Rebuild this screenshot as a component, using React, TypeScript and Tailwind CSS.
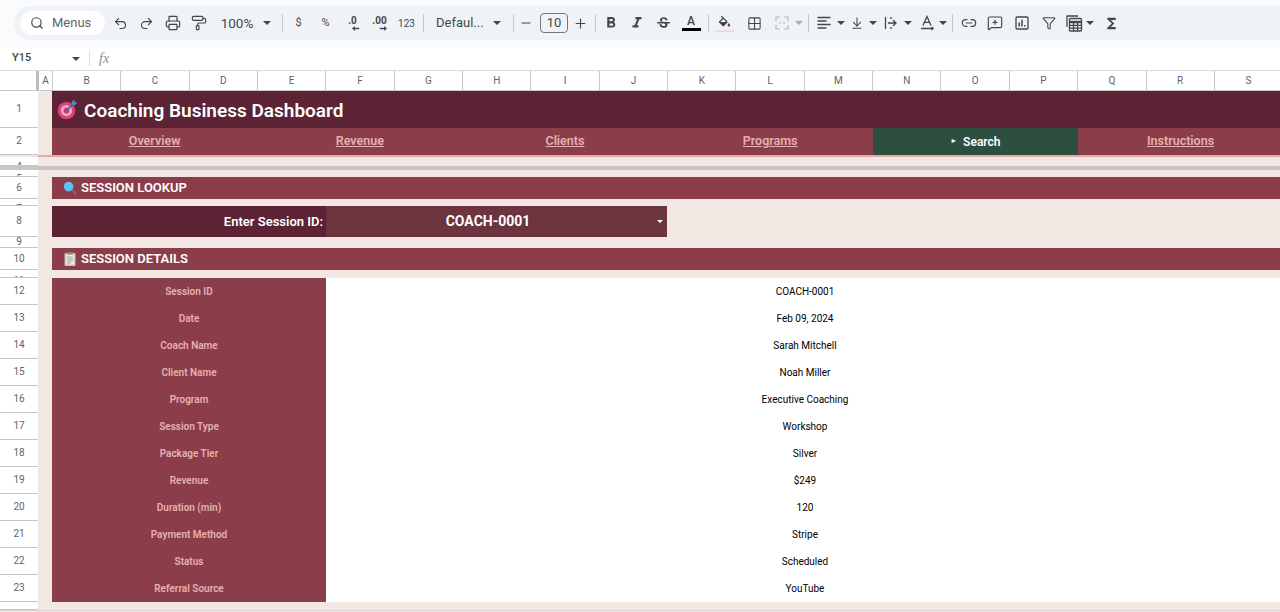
import React from "react";
import {
  ArrowDownToLine,
  Filter,
  Grid2x2,
  Link2,
  MessageSquarePlus,
  Minus,
  PaintRoller,
  Plus,
  Printer,
  Redo2,
  Search,
  Undo2,
} from "lucide-react";
import { MdFormatBold, MdFormatItalic, MdFunctions, MdStrikethroughS } from "react-icons/md";

const columns = ["B", "C", "D", "E", "F", "G", "H", "I", "J", "K", "L", "M", "N", "O", "P", "Q", "R", "S"];

const navItems = ["Overview", "Revenue", "Clients", "Programs", "Search", "Instructions"];

const details = [
  { row: 12, label: "Session ID", value: "COACH-0001" },
  { row: 13, label: "Date", value: "Feb 09, 2024" },
  { row: 14, label: "Coach Name", value: "Sarah Mitchell" },
  { row: 15, label: "Client Name", value: "Noah Miller" },
  { row: 16, label: "Program", value: "Executive Coaching" },
  { row: 17, label: "Session Type", value: "Workshop" },
  { row: 18, label: "Package Tier", value: "Silver" },
  { row: 19, label: "Revenue", value: "$249" },
  { row: 20, label: "Duration (min)", value: "120" },
  { row: 21, label: "Payment Method", value: "Stripe" },
  { row: 22, label: "Status", value: "Scheduled" },
  { row: 23, label: "Referral Source", value: "YouTube" },
];

const Caret = () => (
  <span className="w-[8px] h-0 border-x-[4px] border-t-[4px] border-x-transparent border-t-[#444746]" />
);

const Btn = ({ className, children }: { className: string; children: React.ReactNode }) => (
  <div className={`flex items-center justify-center shrink-0 text-[#444746] ${className}`}>{children}</div>
);

const Sep = ({ className }: { className: string }) => (
  <div className={`w-px h-[18px] bg-[#c7c7c7] shrink-0 ${className}`} />
);

const TargetIcon = () => (
  <svg width="21" height="21" viewBox="0 0 20 20">
    <circle cx="9" cy="11" r="8.4" fill="#d6447c" />
    <circle cx="9" cy="11" r="5.4" fill="#f3a6c4" />
    <circle cx="9" cy="11" r="2.7" fill="#c9356d" />
    <path d="M9 11 L16 4" stroke="#3d6fa8" strokeWidth="1.6" />
    <path d="M14 2.5 L16.5 0.5 L17 3 L19.5 3.5 L17 6 L14.5 5.5 Z" fill="#3f8fd6" />
  </svg>
);

const LensIcon = () => (
  <svg width="14" height="14" viewBox="0 0 14 14">
    <path d="M9 9 L13 13" stroke="#9c5a86" strokeWidth="2" strokeLinecap="round" />
    <circle cx="5.6" cy="5.6" r="4.8" fill="#5cc4ee" />
  </svg>
);

const ClipboardIcon = () => (
  <svg width="12" height="14" viewBox="0 0 12 14">
    <rect x="0.5" y="1" width="11" height="13" rx="1" fill="#cfc3b8" />
    <rect x="2" y="2.5" width="8" height="10" fill="#f2ede8" />
    <rect x="3" y="0" width="6" height="2.5" fill="#8d8378" />
    <path d="M3 5h6M3 7h6M3 9h6M3 11h4" stroke="#8c97a8" strokeWidth="0.9" />
  </svg>
);

const FillIcon = () => (
  <svg width="15" height="14" viewBox="0 0 24 20" fill="#444746">
    <path d="M16.56 8.94L7.62 0 6.21 1.41l2.38 2.38-5.15 5.15c-.59.59-.59 1.54 0 2.12l5.5 5.5c.29.29.68.44 1.06.44s.77-.15 1.06-.44l5.5-5.5c.59-.58.59-1.53 0-2.12zM5.21 10L10 5.21 14.79 10H5.21zM19 11.5s-2 2.17-2 3.5c0 1.1.9 2 2 2s2-.9 2-2c0-1.33-2-3.5-2-3.5z" />
  </svg>
);

const AlignIcon = () => (
  <svg width="16" height="16" viewBox="0 0 16 16" fill="none" stroke="#444746" strokeWidth="1.3">
    <path d="M1.5 2.5h13M1.5 6h9M1.5 9.5h13M1.5 13h9" />
  </svg>
);

const MergeIcon = () => (
  <svg width="16" height="16" viewBox="0 0 16 16" fill="none" stroke="#b4b6b8" strokeWidth="1.2">
    <path d="M2 6V2h4M10 2h4v4M2 10v4h4M10 14h4v-4" />
    <path d="M5 8h2M9 8h2" />
  </svg>
);

const WrapIcon = () => (
  <svg width="16" height="16" viewBox="0 0 16 16" fill="none" stroke="#444746" strokeWidth="1.3">
    <path d="M2.5 2v12" />
    <path d="M8 2v2M8 12v2" />
    <path d="M5 8h8M10 5l3 3-3 3" />
  </svg>
);

const RotateIcon = () => (
  <svg width="15" height="16" viewBox="0 0 15 16" fill="none" stroke="#444746" strokeWidth="1.3">
    <path d="M3 10.5 L7 1.5 L11 10.5 M4.4 7.4h5.2" />
    <path d="M1 13.5h12M11.5 12l1.7 1.5-1.7 1.5" />
  </svg>
);

const ChartIcon = () => (
  <svg width="16" height="16" viewBox="0 0 16 16" fill="none" stroke="#444746" strokeWidth="1.3">
    <rect x="2" y="2" width="12" height="12" rx="1" />
    <path d="M5.2 11.5V7.5M8 11.5V4.8" strokeWidth="1.5" />
    <path d="M10.8 11.5V10" strokeWidth="1.5" />
  </svg>
);

const TableCalcIcon = () => (
  <svg width="18" height="18" viewBox="0 0 18 18" fill="none" stroke="#444746" strokeWidth="1.3">
    <path d="M2 13V2h11" />
    <rect x="4.5" y="4.5" width="12" height="12.5" rx="1" />
    <path d="M4.5 8h12" strokeWidth="2.4" />
    <path d="M4.5 11.3h12M4.5 14.2h12M8.5 9v8M12.5 9v8" />
  </svg>
);

const Toolbar = () => (
  <div className="h-[47px] shrink-0 pt-[6px] pl-[14px] bg-[#f9fbfd]">
    <div className="h-[34px] flex items-center pl-[6px] bg-[#eff3f8] rounded-l-[17px]">
      <div className="w-[85px] h-[24px] shrink-0 mr-[2px] flex items-center bg-white rounded-full pl-[10px] text-[#444746]">
        <Search className="w-[14px] h-[14px]" strokeWidth={2} />
        <span className="ml-[8px] text-[13px] text-[#5f6368]">Menus</span>
      </div>
      <Btn className="w-[26px]"><Undo2 className="w-[15px] h-[15px]" strokeWidth={1.7} /></Btn>
      <Btn className="w-[26px]"><Redo2 className="w-[15px] h-[15px]" strokeWidth={1.7} /></Btn>
      <Btn className="w-[27px]"><Printer className="w-[16px] h-[16px]" strokeWidth={1.8} /></Btn>
      <Btn className="w-[26px]"><PaintRoller className="w-[16px] h-[16px]" strokeWidth={1.7} /></Btn>
      <Btn className="w-[50px] text-[13.5px]">100%</Btn>
      <Btn className="w-[10px]"><Caret /></Btn>
      <Sep className="ml-[10px] mr-[2px]" />
      <Btn className="w-[27px] text-[11px]">$</Btn>
      <Btn className="w-[27px] text-[11px]">%</Btn>
      <Btn className="w-[27px] flex-col text-[10px] font-bold leading-[10px]">
        <span>.0</span>
        <svg width="8" height="5" viewBox="0 0 10 6" fill="#444746" className="ml-[6px]"><path d="M0 3l3.5-3v2H9v2H3.5v2z" /></svg>
      </Btn>
      <Btn className="w-[27px] flex-col text-[10px] font-bold leading-[10px]">
        <span>.00</span>
        <svg width="8" height="5" viewBox="0 0 10 6" fill="#444746" className="ml-[6px]"><path d="M10 3L6.5 0v2H1v2h5.5v2z" /></svg>
      </Btn>
      <Btn className="w-[27px] text-[10px]">123</Btn>
      <Sep className="ml-[3px] mr-[12px]" />
      <Btn className="w-[68px] justify-start text-[13px]">
        <span className="w-[57px]">Defaul...</span>
        <Caret />
      </Btn>
      <Sep className="ml-[9px]" />
      <Btn className="w-[24px]"><Minus className="w-[14px] h-[14px]" strokeWidth={1.8} /></Btn>
      <div className="w-[28px] h-[20px] ml-[2px] shrink-0 flex items-center justify-center border border-[#747775] rounded-[4px] text-[13px] text-[#444746]">10</div>
      <Btn className="w-[24px]"><Plus className="w-[15px] h-[15px]" strokeWidth={1.8} /></Btn>
      <Sep className="ml-[3px] mr-[2px]" />
      <Btn className="w-[26px]"><MdFormatBold className="w-[18px] h-[18px]" /></Btn>
      <Btn className="w-[26px]"><MdFormatItalic className="w-[18px] h-[18px]" /></Btn>
      <Btn className="w-[27px]"><MdStrikethroughS className="w-[17px] h-[17px]" /></Btn>
      <Btn className="w-[28px] flex-col">
        <span className="text-[12px] leading-[13px] font-medium">A</span>
        <span className="w-[19px] h-[3px] bg-black" />
      </Btn>
      <Sep className="ml-[3px] mr-[2px]" />
      <Btn className="w-[26px] flex-col">
        <FillIcon />
        <span className="w-[19px] h-[2px] mt-[1px] bg-[#eadcdc]" />
      </Btn>
      <Btn className="w-[26px] ml-[4px]"><Grid2x2 className="w-[15px] h-[15px]" strokeWidth={1.7} /></Btn>
      <Btn className="w-[26px] ml-[2px]"><MergeIcon /></Btn>
      <Btn className="w-[8px] opacity-40"><Caret /></Btn>
      <Sep className="ml-[5px] mr-[2px]" />
      <Btn className="w-[26px]"><AlignIcon /></Btn>
      <Btn className="w-[8px]"><Caret /></Btn>
      <Btn className="w-[24px]"><ArrowDownToLine className="w-[14px] h-[14px]" strokeWidth={1.8} /></Btn>
      <Btn className="w-[8px]"><Caret /></Btn>
      <Btn className="w-[24px] ml-[2px]"><WrapIcon /></Btn>
      <Btn className="w-[10px]"><Caret /></Btn>
      <Btn className="w-[24px] ml-[2px]"><RotateIcon /></Btn>
      <Btn className="w-[8px]"><Caret /></Btn>
      <Sep className="ml-[5px] mr-[3px]" />
      <Btn className="w-[26px]"><Link2 className="w-[16px] h-[16px]" strokeWidth={1.8} /></Btn>
      <Btn className="w-[26px]"><MessageSquarePlus className="w-[16px] h-[16px]" strokeWidth={1.7} /></Btn>
      <Btn className="w-[26px] ml-[1px]"><ChartIcon /></Btn>
      <Btn className="w-[26px] ml-[1px]"><Filter className="w-[14px] h-[14px]" strokeWidth={1.8} /></Btn>
      <Btn className="w-[24px]"><TableCalcIcon /></Btn>
      <Btn className="w-[8px]"><Caret /></Btn>
      <Btn className="w-[26px] ml-[4px]"><MdFunctions className="w-[17px] h-[17px]" /></Btn>
    </div>
  </div>
);

const FormulaBar = () => (
  <div className="h-[24px] shrink-0 flex items-center bg-white border-b border-[#dadce0] text-[#444746]">
    <span className="w-[72px] pl-[12px] text-[11px] font-medium">Y15</span>
    <Caret />
    <div className="w-px h-[15px] ml-[9px] bg-[#dadce0]" />
    <span className="ml-[9px] font-['Liberation_Serif',serif] italic text-[14px] text-[#8a8a8a]">fx</span>
  </div>
);

const ColumnHeader = () => (
  <div className="h-[20px] shrink-0 flex bg-white border-b border-[#c7c7c7] overflow-hidden text-[10px] text-[#5f6368]">
    <div className="w-[39px] shrink-0 border-r-[3px] border-[#bdbdbd]" />
    <div className="w-[13px] shrink-0 flex items-center justify-center">A</div>
    {columns.map((c) => (
      <div key={c} className="w-[68.35px] shrink-0 flex items-center justify-center border-l border-[#c7c7c7]">
        {c}
      </div>
    ))}
  </div>
);

const Row = ({
  num,
  className,
  numClass = "items-center",
  children,
}: {
  num: number;
  className: string;
  numClass?: string;
  children?: React.ReactNode;
}) => (
  <div className={`flex shrink-0 overflow-hidden ${className}`}>
    <div className={`w-[38px] shrink-0 flex justify-center overflow-hidden bg-white border-b border-[#c7c7c7] text-[10px] leading-[12px] text-[#5f6368] ${numClass}`}>
      {num}
    </div>
    <div className="flex-1 min-w-0 flex">
      <div className="w-[14px] shrink-0" />
      {children}
    </div>
  </div>
);

const SectionHeader = ({ icon, title }: { icon: React.ReactNode; title: string }) => (
  <div className="flex-1 flex items-center bg-[#8b3e4a] text-white font-semibold text-[13px]">
    <div className="w-[29px] flex justify-center pl-[6px]">{icon}</div>
    <span>{title}</span>
  </div>
);

export default function App() {
  return (
    <div className="w-[1280px] h-[612px] overflow-hidden flex flex-col bg-[#f2e8e3] font-['Roboto','Liberation_Sans',sans-serif]">
      <Toolbar />
      <FormulaBar />
      <ColumnHeader />

      <Row num={1} className="h-[37px]">
        <div className="flex-1 flex items-center bg-[#5b2333] text-white text-[19px] font-semibold">
          <div className="w-[32px] flex justify-center pr-[2px]"><TargetIcon /></div>
          <span className="pt-[3px]">Coaching Business Dashboard</span>
        </div>
      </Row>
      <Row num={2} className="h-[27px]">
        <div className="flex-1 flex overflow-hidden">
          {navItems.map((item) =>
            item === "Search" ? (
              <div key={item} className="w-[205.2px] shrink-0 flex items-center justify-center bg-[#2d4f40] text-white text-[12px] font-semibold">
                <span className="mr-[6px] text-[7px]">►</span>
                {item}
              </div>
            ) : (
              <div key={item} className="w-[205.2px] shrink-0 flex items-center justify-center bg-[#8b3e4a] text-[#e6b0b0] text-[12.5px] font-semibold underline">
                {item}
              </div>
            )
          )}
        </div>
      </Row>
      <div className="h-[2px] ml-[38px] bg-[#e3aca3] shrink-0" />
      <Row num={4} className="h-[9px]" numClass="items-start pt-[4px]" />
      <div className="h-[4px] bg-[#c6c6c6] shrink-0" />
      <Row num={5} className="h-[7px]" numClass="items-start pt-[3px]" />
      <Row num={6} className="h-[22px]">
        <SectionHeader icon={<LensIcon />} title="SESSION LOOKUP" />
      </Row>
      <Row num={7} className="h-[7px]" numClass="items-start pt-[4px]" />
      <Row num={8} className="h-[31px]">
        <div className="w-[274px] shrink-0 flex items-center justify-end pr-[3px] bg-[#5b2333] text-white text-[13px] font-semibold">
          Enter Session ID:
        </div>
        <div className="w-[341px] shrink-0 flex items-center bg-[#6b343f] text-white text-[14px] font-bold">
          <span className="flex-1 text-center pr-[7px]">COACH-0001</span>
          <span className="w-0 h-0 mr-[4px] border-x-[3px] border-t-[3px] border-x-transparent border-t-white" />
        </div>
      </Row>
      <Row num={9} className="h-[11px]" />
      <Row num={10} className="h-[22px]">
        <SectionHeader icon={<ClipboardIcon />} title="SESSION DETAILS" />
      </Row>
      <Row num={11} className="h-[8px]" numClass="items-start pt-[5px]" />
      {details.map((d) => (
        <Row key={d.row} num={d.row} className="h-[27px]">
          <div className="w-[274px] shrink-0 flex items-center justify-center bg-[#8b3e4a] text-[#e6b0b0] text-[10px] font-semibold">
            {d.label}
          </div>
          <div className="flex-1 flex items-center justify-center pl-[4px] bg-white text-black text-[10px]">
            {d.value}
          </div>
        </Row>
      ))}
      <Row num={24} className="h-[8px]" numClass="items-start pt-[6px]" />
      <div className="h-px bg-[#d6d6d6] shrink-0" />
      <div className="h-px shrink-0" />
    </div>
  );
}
